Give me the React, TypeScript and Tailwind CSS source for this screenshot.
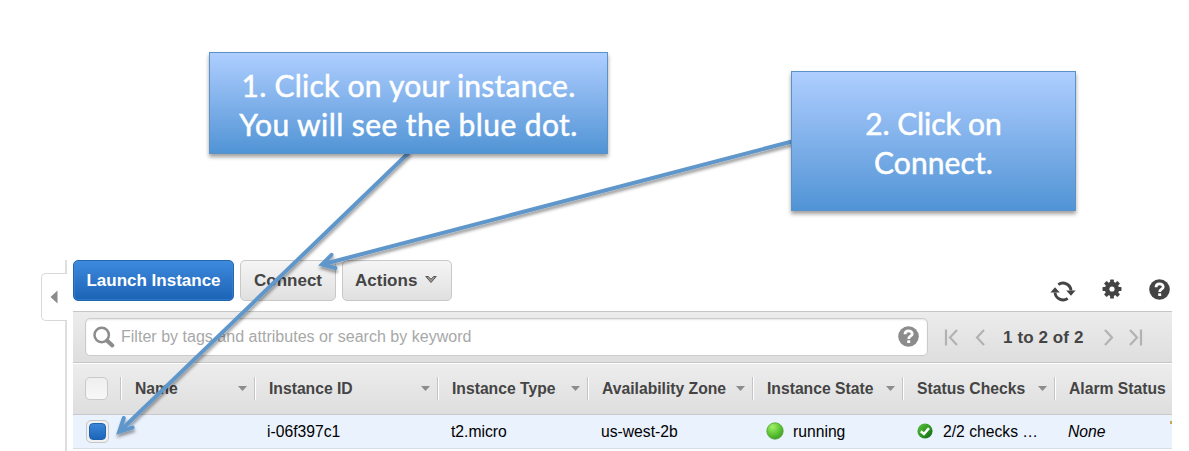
import React from "react";

type Column = {
  label: string;
  width: string;
  inset: string;
  caret: boolean;
  value: React.ReactNode;
};

const RunningDot = () => (
  <svg width="18" height="18" viewBox="0 0 18 18" className="mr-[9px] shrink-0">
    <defs>
      <radialGradient id="dot" cx="0.35" cy="0.25" r="0.8">
        <stop offset="0" stopColor="#a2ee6c" />
        <stop offset="0.5" stopColor="#66cc3a" />
        <stop offset="1" stopColor="#3a9e20" />
      </radialGradient>
    </defs>
    <circle cx="9" cy="9" r="8.2" fill="url(#dot)" stroke="#4fa534" strokeWidth="0.8" />
  </svg>
);

const CheckBadge = () => (
  <svg width="16" height="16" viewBox="0 0 16 16" className="mr-[10px] shrink-0">
    <defs>
      <linearGradient id="badge" x1="0" y1="0" x2="1" y2="1">
        <stop offset="0" stopColor="#63c446" />
        <stop offset="0.5" stopColor="#2f9a22" />
        <stop offset="1" stopColor="#0f6414" />
      </linearGradient>
    </defs>
    <circle cx="8" cy="8" r="7.6" fill="url(#badge)" />
    <path d="M3.8 8.3 L6.9 11 L12 5.2" fill="none" stroke="#fff" strokeWidth="2.5" />
  </svg>
);

const columns: Column[] = [
  { label: "Name", width: "w-[134px]", inset: "", caret: true, value: "" },
  { label: "Instance ID", width: "w-[183px]", inset: "pl-[12px]", caret: true, value: "i-06f397c1" },
  { label: "Instance Type", width: "w-[150px]", inset: "pl-[13px]", caret: true, value: "t2.micro" },
  { label: "Availability Zone", width: "w-[165px]", inset: "pl-[13px]", caret: true, value: "us-west-2b" },
  { label: "Instance State", width: "w-[150px]", inset: "pl-[13px]", caret: true, value: <><RunningDot />running</> },
  { label: "Status Checks", width: "w-[152px]", inset: "pl-[14px]", caret: true, value: <><CheckBadge />2/2 checks …</> },
  { label: "Alarm Status", width: "w-[117px]", inset: "pl-[13px]", caret: false, value: <i>None</i> },
];

const QuestionIcon = ({ color, size }: { color: string; size: number }) => (
  <svg width={size} height={size} viewBox="0 0 21 21" className="shrink-0">
    <circle cx="10.5" cy="10.5" r="10.3" fill={color} />
    <path d="M7 8.2 C7 3.9 14.2 4 14.2 7.9 C14.2 10.3 10.7 10.1 10.7 12.9" fill="none" stroke="#fff" strokeWidth="2.8" />
    <rect x="9.2" y="14.3" width="3" height="2.7" fill="#fff" />
  </svg>
);

const RefreshIcon = () => (
  <svg width="26" height="21" viewBox="0 0 26 21">
    <g fill="none" stroke="#444" strokeWidth="2.9">
      <path d="M8.3 3.7 A8 8 0 0 1 21 9.5" />
      <path d="M17.7 17.3 A8 8 0 0 1 5 11.5" />
    </g>
    <path d="M16.2 9.6 H25.6 L21 14.8 Z" fill="#444" />
    <path d="M0.4 11.4 H9.8 L5 6.2 Z" fill="#444" />
  </svg>
);

const teeth = [0, 45, 90, 135, 180, 225, 270, 315];

const GearIcon = () => (
  <svg width="20" height="20" viewBox="0 0 20 20">
    <g fill="#444">
      {teeth.map((angle) => (
        <rect key={angle} x="8.1" y="0.5" width="3.8" height="5" rx="0.6" transform={`rotate(${angle} 10 10)`} />
      ))}
    </g>
    <circle cx="10" cy="10" r="4.9" fill="none" stroke="#444" strokeWidth="4.6" />
  </svg>
);

const Pager = ({ d, width }: { d: string; width: number }) => (
  <svg width={width} height="17" viewBox={`0 0 ${width} 17`} fill="none" stroke="#b2b2b2" strokeWidth="2.2">
    <path d={d} />
  </svg>
);

const Callouts = () => (
  <>
    <svg width="1189" height="451" className="pointer-events-none absolute top-0 left-0">
      <defs>
        <filter id="soft" x="-10%" y="-10%" width="120%" height="120%">
          <feDropShadow dx="0.5" dy="3" stdDeviation="1.8" floodColor="#000" floodOpacity="0.38" />
        </filter>
      </defs>
      <g fill="none" stroke="#6197cb" strokeWidth="4" strokeLinecap="round" filter="url(#soft)">
        <path d="M408.500 153 L120 431" />
        <path d="M123.800 418 L119.200 431.700 L132.700 427.500" strokeLinejoin="miter" />
        <path d="M792 141.500 L323 264.200" />
        <path d="M331.500 254.800 L322 264.500 L335.500 268" strokeLinejoin="miter" />
      </g>
    </svg>
    <div className="absolute top-[52px] left-[209px] flex h-[102px] w-[399px] flex-col items-center justify-center border border-[#5b93c9] bg-linear-to-b from-[#aeceff] to-[#5094d5] pt-[3px] font-['Lato',sans-serif] text-[30px] leading-[39px] text-white shadow-[0_3px_4px_rgba(0,0,0,0.38)] [-webkit-text-stroke:0.5px_white]">
      <span className="tracking-[0.25px] whitespace-nowrap">1. Click on your instance.</span>
      <span className="tracking-[0.42px] whitespace-nowrap">You will see the blue dot.</span>
    </div>
    <div className="absolute top-[71px] left-[791px] flex h-[140px] w-[285px] flex-col items-center justify-center border border-[#5b93c9] bg-linear-to-b from-[#aeceff] to-[#5094d5] pt-[3px] font-['Lato',sans-serif] text-[30px] leading-[39px] text-white shadow-[0_3px_4px_rgba(0,0,0,0.38)] [-webkit-text-stroke:0.5px_white]">
      <span className="tracking-[-0.1px] whitespace-nowrap">2. Click on</span>
      <span className="tracking-[0.1px] whitespace-nowrap">Connect.</span>
    </div>
  </>
);

export default function App() {
  return (
    <div className="relative flex h-[451px] w-[1189px] overflow-hidden bg-white pt-[260px] pl-[41px] font-['Liberation_Sans',Arial,sans-serif] text-[15.7px] text-black">
      <aside className="flex w-[26px] shrink-0 flex-col">
        <div className="h-[13px] border-r-2 border-[#dedede]" />
        <div className="flex h-[48px] items-center rounded-l-[5px] border border-r-0 border-[#d8d8d8] pl-[8px]">
          <svg width="8" height="14" viewBox="0 0 8 14">
            <path d="M7.500 0.500 V13.500 L0.500 7 Z" fill="#8b8b8b" />
          </svg>
        </div>
        <div className="grow border-r-2 border-[#dedede]" />
      </aside>

      <main className="ml-[6px] flex w-[1099px] shrink-0 flex-col">
        <div className="flex h-[51px] shrink-0 items-start gap-[6px] text-[17px] font-bold text-[#444]">
          <button className="h-[41px] w-[161px] rounded-[5px] border border-[#1f66b3] bg-linear-to-b from-[#3d8ade] to-[#1b63b5] pt-px text-white shadow-[inset_0_0_0_1px_rgba(70,140,215,0.45)]">
            Launch Instance
          </button>
          <button className="h-[41px] w-[96px] rounded-[5px] border border-[#c8c8c8] bg-linear-to-b from-[#f5f5f5] to-[#e0e0e0] pt-px">
            Connect
          </button>
          <button className="flex h-[41px] w-[110px] items-center rounded-[5px] border border-[#c8c8c8] bg-linear-to-b from-[#f5f5f5] to-[#e0e0e0] pt-px pl-[12px]">
            Actions
            <svg width="12" height="9" viewBox="0 0 12 9" className="mb-[3px] ml-[8px]">
              <path d="M0.800 1.500 H3.200 L6 4.200 L8.800 1.500 H11.200 L6 7.500 Z" fill="#9a9a9a" stroke="#555" strokeWidth="1" />
            </svg>
          </button>
          <div className="ml-auto flex pt-[19px] pr-[2px]">
            <div className="w-[52px] pt-[2px]"><RefreshIcon /></div>
            <div className="w-[47px]"><GearIcon /></div>
            <QuestionIcon color="#444" size={21} />
          </div>
        </div>

        <div className="flex h-[52px] shrink-0 items-center border-t border-b border-t-[#c6c6c6] border-b-[#c6c6c6] bg-linear-to-b from-[#ececec] to-[#dedede] pl-[12px]">
          <div className="mb-px flex h-[38px] w-[843px] items-center rounded-[5px] border border-[#cbcbcb] bg-white pr-[8px] pl-[7px] text-[16px] text-[#a8a8a8] shadow-[inset_0_1px_2px_rgba(0,0,0,0.1)]">
            <svg width="22" height="23" viewBox="0 0 22 23" className="mt-[2px] mr-[6px]">
              <circle cx="8.700" cy="9" r="7.200" fill="none" stroke="#8c8c8c" strokeWidth="2.500" />
              <path d="M14 14.500 L19.300 19.500" stroke="#8c8c8c" strokeWidth="4" strokeLinecap="round" />
            </svg>
            <span className="grow tracking-[0.02px]">Filter by tags and attributes or search by keyword</span>
            <QuestionIcon color="#8c8c8c" size={21} />
          </div>
          <div className="flex items-center pl-[16px] text-[17px] font-bold text-[#444]">
            <Pager width={14} d="M2 0.500 V16.500 M13 1 L6 8.500 L13 16" />
            <div className="w-[17px]" />
            <Pager width={10} d="M9 1 L2 8.500 L9 16" />
            <span className="w-[118px] pt-px pl-[18px] tracking-[0.1px] whitespace-nowrap">1 to 2 of 2</span>
            <Pager width={11} d="M2 1 L9 8.500 L2 16" />
            <div className="w-[15px]" />
            <Pager width={14} d="M1 1 L8 8.500 L1 16 M12 0.500 V16.500" />
          </div>
        </div>

        <div className="flex h-[52px] shrink-0 items-center overflow-hidden border-t border-b border-t-white border-b-[#c9c9c9] bg-linear-to-b from-[#ededed] to-[#dedede] pb-px font-bold text-[#444]">
          <div className="flex w-[47px] shrink-0 pl-[12px]">
            <div className="h-[23px] w-[23px] rounded-[5px] border border-[#c9c9c9] bg-linear-to-b from-[#eeeeee] to-[#f8f8f8]" />
          </div>
          {columns.map((c) => (
            <div key={c.label} className={`${c.width} flex h-[23px] shrink-0 items-center border-l border-[#c4c4c4] pr-[7px] shadow-[inset_1px_0_0_#fff]`}>
              <span className="pl-[14px] whitespace-nowrap">{c.label}</span>
              {c.caret && (
                <svg width="9" height="5" viewBox="0 0 9 5" className="ml-auto">
                  <path d="M0 0 H9 L4.500 5 Z" fill="#8c8c8c" />
                </svg>
              )}
            </div>
          ))}
        </div>

        <div className="flex h-[34px] shrink-0 items-center overflow-hidden border-b border-[#d6dce4] bg-[#eaf2fe]">
          <div className="flex w-[48px] shrink-0 pl-[13px]">
            <div className="flex h-[23px] w-[23px] items-center justify-center rounded-[5px] border border-[#c6c6c6] bg-[#f0f0f0]">
              <div className="h-[17px] w-[17px] rounded-[4px] border border-[#1c63b2] bg-linear-to-b from-[#3a86d8] to-[#1d65b8]" />
            </div>
          </div>
          {columns.map((c) => (
            <div key={c.label} className={`${c.width} ${c.inset} flex shrink-0 items-center whitespace-nowrap`}>{c.value}</div>
          ))}
          <div className="mb-[19px] -ml-[2px] h-[3px] w-[2px] shrink-0 bg-[#caa25c]" />
        </div>
      </main>
      <Callouts />
    </div>
  );
}
